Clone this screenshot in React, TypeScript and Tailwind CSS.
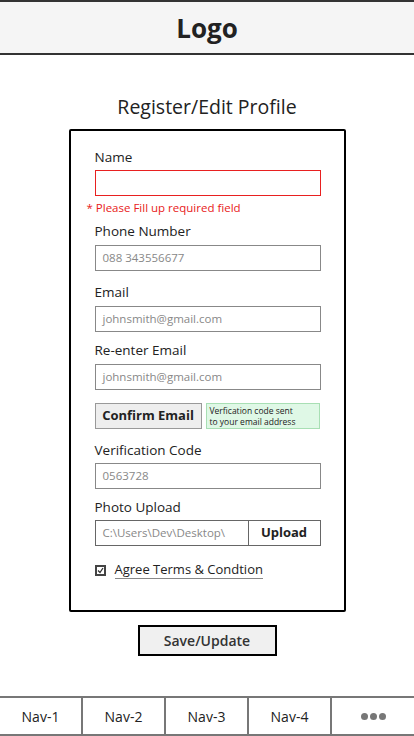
import React from "react";

const font = { fontFamily: '"Open Sans", "Liberation Sans", sans-serif' };

function Label({ children, className = "" }: { children: React.ReactNode; className?: string }) {
  return <div className={`text-[13.5px] leading-4 text-[#222] ${className}`}>{children}</div>;
}

function Field({ value, className = "", red = false }: { value?: string; className?: string; red?: boolean }) {
  return (
    <div
      className={`w-[226px] h-[26px] flex items-center px-[7px] text-[11.5px] text-[#888] border ${
        red ? "border-[#e82020]" : "border-[#888]"
      } bg-white ${className}`}
    >
      {value}
    </div>
  );
}

export default function App() {
  return (
    <div className="w-[414px] h-[736px] flex flex-col bg-white text-[#222]" style={font}>
      <header className="h-[55px] bg-[#f5f5f5] border-t-2 border-b-2 border-[#333] flex items-center justify-center">
        <span className="text-[26px] font-bold text-[#222] leading-none">Logo</span>
      </header>

      <div className="flex flex-col items-center">
        <h1 className="mt-[41px] text-[19.5px] leading-[22px] text-[#222]">Register/Edit Profile</h1>
        <div className="mt-[11px] w-[277px] h-[483px] border-2 border-black rounded-[2px] pl-6 pt-[18px] flex flex-col">
          <Label>Name</Label>
          <Field red className="mt-[5px]" />
          <div className="mt-[5px] -ml-2 text-[11.5px] leading-[14px] text-[#e82020]">* Please Fill up required field</div>
          <Label className="mt-[8px]">Phone Number</Label>
          <Field value="088 343556677" className="mt-[6px]" />
          <Label className="mt-[13px]">Email</Label>
          <Field value="johnsmith@gmail.com" className="mt-[6px]" />
          <Label className="mt-[10px]">Re-enter Email</Label>
          <Field value="johnsmith@gmail.com" className="mt-[6px]" />
          <div className="mt-[13px] flex gap-[4px] h-[26px]">
            <div className="w-[107px] h-[26px] bg-[#eee] border border-[#999] flex items-center justify-center text-[13px] font-bold text-[#222]">
              Confirm Email
            </div>
            <div className="w-[114px] h-[26px] bg-[#dff8e6] border border-[#a8dfb4] px-[3px] flex flex-col justify-center text-[8.5px] leading-[11px] text-[#222]">
              <span>Verfication code sent</span>
              <span>to your email address</span>
            </div>
          </div>
          <Label className="mt-[13px]">Verification Code</Label>
          <Field value="0563728" className="mt-[5px]" />
          <Label className="mt-[10px]">Photo Upload</Label>
          <div className="mt-[5px] w-[226px] h-[26px] flex border border-[#666]">
            <div className="flex-1 flex items-center px-[7px] text-[11.5px] text-[#888]">C:\Users\Dev\Desktop\</div>
            <div className="w-[72px] border-l border-[#666] flex items-center justify-center text-[13px] font-bold text-[#222]">Upload</div>
          </div>
          <div className="mt-[15px] flex items-center">
            <div className="w-[11px] h-[11px] border-2 border-[#444] flex items-center justify-center">
              <svg width="7" height="7" viewBox="0 0 7 7">
                <path d="M1 3.5 L3 5.5 L6 1" stroke="#333" strokeWidth="1.3" fill="none" />
              </svg>
            </div>
            <span className="ml-[9px] text-[13px] leading-4 text-[#222] border-b border-[#888] pb-[1px]">Agree Terms &amp; Condtion</span>
          </div>
        </div>
        <div className="mt-[13px] w-[139px] h-[31px] border-2 border-black bg-[#f0f0f0] flex items-center justify-center text-[14px] font-semibold text-[#333]">
          Save/Update
        </div>
      </div>

      <nav className="mt-auto h-[40px] border-t-2 border-b-2 border-[#777] flex">
        {["Nav-1", "Nav-2", "Nav-3", "Nav-4"].map((n) => (
          <div key={n} className="w-[83px] border-r-2 border-[#777] flex items-center justify-center text-[14px] text-[#222]">
            {n}
          </div>
        ))}
        <div className="flex-1 flex items-center justify-center gap-[2px]">
          <span className="w-[7px] h-[7px] rounded-full bg-[#777]" />
          <span className="w-[7px] h-[7px] rounded-full bg-[#777]" />
          <span className="w-[7px] h-[7px] rounded-full bg-[#777]" />
        </div>
      </nav>
    </div>
  );
}
